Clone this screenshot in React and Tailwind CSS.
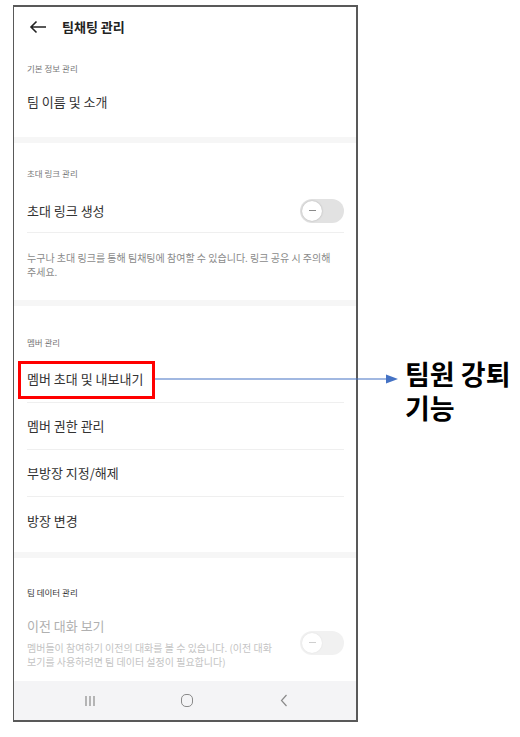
const font = { fontFamily: '"Noto Sans CJK KR", "Noto Sans", sans-serif' };

function Toggle({ disabled }) {
  return (
    <div
      className={`flex h-[24px] w-[44px] shrink-0 items-center rounded-full px-[2px] ${
        disabled ? "bg-[#f1f1f1]" : "bg-[#e2e2e2]"
      }`}
    >
      <div
        className={`flex h-[20px] w-[20px] items-center justify-center rounded-full bg-white ${
          disabled ? "shadow-[0_0_2px_rgba(0,0,0,0.08)]" : "shadow-[0_0_2px_rgba(0,0,0,0.25)]"
        }`}
      >
        <div className={`h-[1.5px] w-[7px] ${disabled ? "bg-[#cfcfcf]" : "bg-[#8a8a8a]"}`} />
      </div>
    </div>
  );
}

function Label({ children, dark }) {
  return (
    <p className={`text-[8.5px] leading-[12px] ${dark ? "text-[#333]" : "text-[#777]"}`}>{children}</p>
  );
}

function Row({ children, last }) {
  return (
    <div className={`flex h-[47px] items-center ${last ? "" : "border-b border-[#efefef]"}`}>
      <span className="text-[13px] text-[#333]">{children}</span>
    </div>
  );
}

function Thick() {
  return <div className="h-[6px] bg-[#f6f6f6]" />;
}

export default function App() {
  return (
    <div className="relative flex h-[737px] w-[520px] items-start bg-white break-keep" style={font}>
      <div className="ml-[13px] mt-[5px] flex h-[717px] w-[345px] flex-col border-2 border-l-[1.5px] border-[#595959] bg-white">
        <header className="flex h-[40px] items-center pl-[15px]">
          <svg width="18" height="14" viewBox="0 0 18 14" fill="none" stroke="#222" strokeWidth="1.6">
            <path d="M17 7H2M7.5 1.5L2 7l5.5 5.5" />
          </svg>
          <h1 className="ml-[15px] text-[13px] font-bold text-[#222]">팀채팅 관리</h1>
        </header>

        <section className="h-[90px] px-[13px] pt-[15px]">
          <Label>기본 정보 관리</Label>
          <div className="mt-[6px] flex h-[44px] items-center">
            <span className="text-[13px] text-[#333]">팀 이름 및 소개</span>
          </div>
        </section>
        <Thick />

        <section className="h-[157px] pl-[13px] pr-[12px] pt-[24px]">
          <Label>초대 링크 관리</Label>
          <div className="mt-[10px] flex h-[44px] items-center justify-between border-b border-[#efefef]">
            <span className="text-[13px] text-[#333]">초대 링크 생성</span>
            <Toggle />
          </div>
          <p className="mt-[18px] text-[10px] leading-[14px] text-[#8a8a8a]">
            누구나 초대 링크를 통해 팀채팅에 참여할 수 있습니다. 링크 공유 시 주의해 주세요.
          </p>
        </section>
        <Thick />

        <section className="h-[246px] pl-[13px] pr-[12px] pt-[30px]">
          <Label>멤버 관리</Label>
          <div className="mt-[8px]">
            <Row>멤버 초대 및 내보내기</Row>
            <Row>멤버 권한 관리</Row>
            <Row>부방장 지정/해제</Row>
            <Row last>방장 변경</Row>
          </div>
        </section>
        <Thick />

        <section className="flex-1 pl-[13px] pr-[12px] pt-[28px]">
          <Label dark>팀 데이터 관리</Label>
          <div className="mt-[18px] flex items-center justify-between">
            <div className="w-[262px]">
              <p className="text-[13px] leading-[20px] text-[#b0b0b0]">이전 대화 보기</p>
              <p className="mt-[5px] text-[10px] leading-[14px] text-[#c4c4c4]">
                멤버들이 참여하기 이전의 대화를 볼 수 있습니다. (이전 대화 보기를 사용하려면 팀 데이터 설정이 필요합니다)
              </p>
            </div>
            <Toggle disabled />
          </div>
        </section>

        <nav className="flex h-[39px] items-center justify-center bg-[#f4f4f6] pl-[4px]">
          <div className="flex w-[97px] justify-center">
            <svg width="12" height="12" viewBox="0 0 12 12" stroke="#8a8a8a" strokeWidth="1.2">
              <path d="M2 1v10M6 1v10M10 1v10" />
            </svg>
          </div>
          <div className="flex w-[97px] justify-center">
            <div className="h-[13px] w-[12px] rounded-[5px] border-[1.3px] border-[#8a8a8a]" />
          </div>
          <div className="flex w-[97px] justify-center">
            <svg width="8" height="13" viewBox="0 0 8 13" fill="none" stroke="#8a8a8a" strokeWidth="1.2">
              <path d="M6.5 1L1.5 6.5 6.5 12" />
            </svg>
          </div>
        </nav>
      </div>

      <div className="ml-[47px] mt-[357px] text-[27px] font-bold leading-[34px] text-black">
        <p>팀원 강퇴</p>
        <p>기능</p>
      </div>

      <div className="absolute left-[18px] top-[361px] h-[38px] w-[137px] border-[3px] border-[#ff0000]" />
      <svg className="absolute left-[155px] top-[373px]" width="244" height="12" viewBox="0 0 244 12">
        <path d="M0 6H232" stroke="#4472c4" strokeWidth="1.2" />
        <path d="M231 1.5L243 6 231 10.5z" fill="#4472c4" />
      </svg>
    </div>
  );
}
